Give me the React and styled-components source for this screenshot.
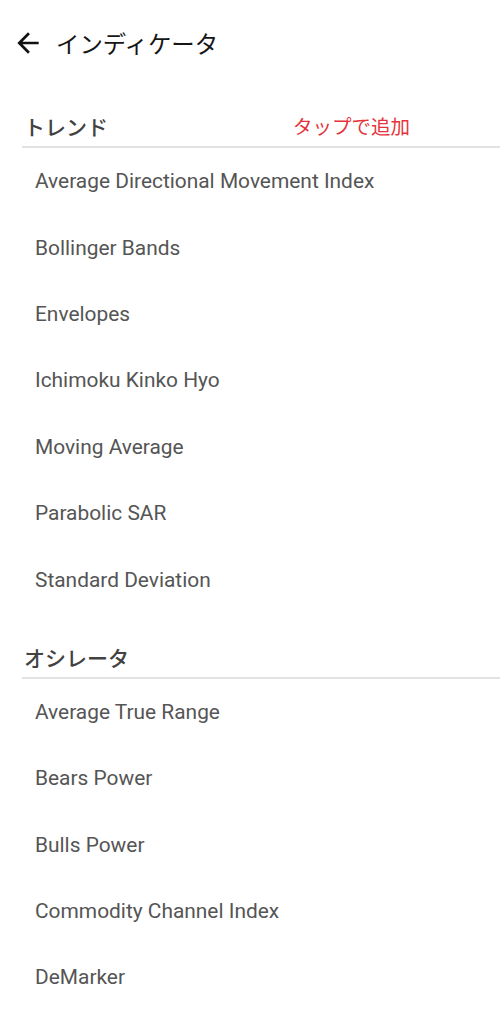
import React from 'react';
import styled, { createGlobalStyle } from 'styled-components';

const GlobalStyle = createGlobalStyle`
    html, body {
        margin: 0;
        padding: 0;
        background: #ffffff;
    }
    body {
        font-family: Roboto, "Noto Sans CJK JP", sans-serif;
    }
`;

const Page = styled.div`
    width: 500px;
    min-height: 1010px;
    background: #ffffff;
    overflow: hidden;
`;

const AppBar = styled.header`
    height: 82px;
    display: flex;
    align-items: center;
    padding: 0 0 0 12px;
    box-sizing: border-box;
    gap: 12px;
`;

const BackButton = styled.button`
    border: none;
    background: none;
    padding: 0;
    width: 32px;
    height: 32px;
    display: flex;
    align-items: center;
    justify-content: center;
    color: #111;
    margin-top: 4px;
`;

const Title = styled.h1`
    margin: 0;
    margin-top: 4px;
    font-family: "Noto Sans CJK JP", sans-serif;
    font-size: 23.4px;
    font-weight: 400;
    color: #161616;
`;

const SectionHeader = styled.div`
    height: 66px;
    margin-left: 22px;
    border-bottom: 2px solid #e2e2e2;
    display: flex;
    align-items: flex-end;
    padding-bottom: 5px;
    box-sizing: border-box;
`;

const SectionTitle = styled.h2`
    margin: 0;
    margin-left: 2px;
    width: 269px;
    font-family: "Noto Sans CJK JP", sans-serif;
    font-size: 21px;
    font-weight: 500;
    color: #424242;
    line-height: 30px;
`;

const Hint = styled.span`
    font-family: "Noto Sans CJK JP", sans-serif;
    font-size: 19.5px;
    color: #e4333b;
    line-height: 30px;
`;

const List = styled.ul`
    list-style: none;
    margin: 0;
    padding: 0;
`;

const Item = styled.li`
    height: 66.4px;
    display: flex;
    align-items: center;
    padding-left: 35px;
    font-family: Roboto, sans-serif;
    font-size: 20.9px;
    color: #555555;
`;

const sections = [
    {
        title: 'トレンド',
        hint: 'タップで追加',
        items: [
            'Average Directional Movement Index',
            'Bollinger Bands',
            'Envelopes',
            'Ichimoku Kinko Hyo',
            'Moving Average',
            'Parabolic SAR',
            'Standard Deviation',
        ],
    },
    {
        title: 'オシレータ',
        items: [
            'Average True Range',
            'Bears Power',
            'Bulls Power',
            'Commodity Channel Index',
            'DeMarker',
        ],
    },
];

const App = () => (
    <>
        <GlobalStyle />
        <Page>
            <AppBar>
                <BackButton aria-label="戻る">
                    <svg width="32" height="32" viewBox="0 0 24 24" fill="currentColor">
                        <path d="M20 11H7.83l5.59-5.59L12 4l-8 8 8 8 1.41-1.41L7.83 13H20v-2z" />
                    </svg>
                </BackButton>
                <Title>インディケータ</Title>
            </AppBar>
            {sections.map((section) => (
                <section key={section.title}>
                    <SectionHeader>
                        <SectionTitle>{section.title}</SectionTitle>
                        {section.hint && <Hint>{section.hint}</Hint>}
                    </SectionHeader>
                    <List>
                        {section.items.map((name) => (
                            <Item key={name}>{name}</Item>
                        ))}
                    </List>
                </section>
            ))}
        </Page>
    </>
);

export default App;
